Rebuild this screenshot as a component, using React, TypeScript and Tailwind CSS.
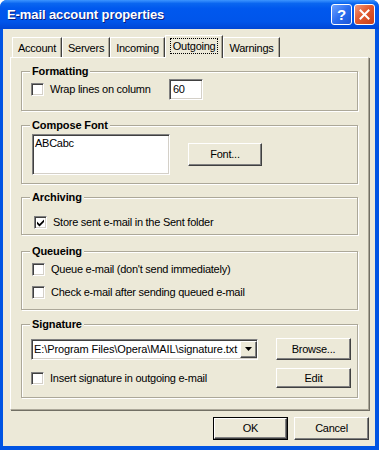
import React from "react";

const FONT = { fontFamily: '"Liberation Sans", Arial, sans-serif' };

function Sunken({ className = "", children }: { className?: string; children?: React.ReactNode }) {
  return (
    <div
      className={
        "bg-white border border-t-[#808080] border-l-[#808080] border-b-white border-r-white shadow-[inset_1px_1px_0_#404040,inset_-1px_-1px_0_#d4d0c8] " +
        className
      }
    >
      {children}
    </div>
  );
}

function Check({ checked = false }: { checked?: boolean }) {
  return (
    <div className="w-[13px] h-[13px] shrink-0 bg-white border border-t-[#808080] border-l-[#808080] border-b-white border-r-white shadow-[inset_1px_1px_0_#404040,inset_-1px_-1px_0_#d4d0c8] flex items-center justify-center">
      {checked && (
        <svg width="9" height="9" viewBox="0 0 9 9">
          <path d="M1 3.5 L3.5 6 L8 1.5 L8 4 L3.5 8.5 L1 6 Z" fill="#000" />
        </svg>
      )}
    </div>
  );
}

function Btn({ children, w = 75, h = 23, def = false }: { children: React.ReactNode; w?: number; h?: number; def?: boolean }) {
  const inner = (
    <div className="w-full h-full flex items-center justify-center border border-t-white border-l-white border-b-[#404040] border-r-[#404040] shadow-[inset_-1px_-1px_0_#808080] text-[11px] text-black">
      {children}
    </div>
  );
  return (
    <div
      style={{ width: w, height: h }}
      className={def ? "border border-black shrink-0" : "shrink-0"}
    >
      {inner}
    </div>
  );
}

function Group({ label, className = "", children }: { label: string; className?: string; children?: React.ReactNode }) {
  return (
    <div
      className={
        "relative border border-[#aca899] shadow-[1px_1px_0_#fff,inset_1px_1px_0_#fff] " + className
      }
    >
      <span className="absolute left-[8px] -top-[8px] px-[2px] bg-[#ECE9D8] text-[11px] font-bold leading-[14px] tracking-[-0.1px] text-black">
        {label}
      </span>
      {children}
    </div>
  );
}

function Tab({ label, selected = false }: { label: string; selected?: boolean }) {
  if (selected) {
    return (
      <div className="relative z-10 -mb-[1px] h-[23px] px-[5px] flex items-start pt-[3px] bg-[#ECE9D8] border border-b-0 border-t-white border-l-white border-r-[#404040] shadow-[inset_-1px_0_0_#aca899]">
        <span className="px-[2px] leading-[14px] outline outline-1 outline-dotted outline-black text-[11px]">
          {label}
        </span>
      </div>
    );
  }
  return (
    <div className="h-[20px] px-[5px] flex items-start pt-[3px] bg-[#ECE9D8] border border-b-0 border-t-white border-l-white border-r-[#404040] shadow-[inset_-1px_0_0_#aca899] text-[11px]">
      <span className="leading-[14px]">{label}</span>
    </div>
  );
}

export default function App() {
  return (
    <div
      style={FONT}
      className="w-[379px] h-[450px] flex flex-col bg-[#0054E3] rounded-t-[7px] overflow-hidden text-black"
    >
      {/* Title bar */}
      <div className="h-[29px] shrink-0 flex items-center pl-[7px] pr-[4px] bg-[linear-gradient(to_bottom,#3D95FF_0%,#0A66F0_12%,#0058EE_30%,#0055EA_75%,#0046D5_100%)]">
        <span className="text-white font-bold text-[13px] tracking-[-0.1px] [text-shadow:1px_1px_0_#0a1e80]">
          E-mail account properties
        </span>
        <div className="ml-auto flex gap-[2px]">
          <div className="w-[21px] h-[21px] rounded-[3px] border border-white bg-[linear-gradient(135deg,#6FA2FF_0%,#2B6EF0_50%,#1A55D8_100%)] flex items-center justify-center text-white font-bold text-[15px] leading-none">
            ?
          </div>
          <div className="w-[21px] h-[21px] rounded-[3px] border border-white bg-[linear-gradient(135deg,#F39A7E_0%,#E25A30_45%,#C8401A_100%)] flex items-center justify-center">
            <svg width="11" height="11" viewBox="0 0 11 11">
              <path d="M1.5 1.5 L9.5 9.5 M9.5 1.5 L1.5 9.5" stroke="#fff" strokeWidth="2" strokeLinecap="square" />
            </svg>
          </div>
        </div>
      </div>

      {/* Body */}
      <div className="flex-1 ml-[3px] mr-[4px] mb-[4px] bg-[#ECE9D8] flex flex-col pt-[6px] pl-[7px] pr-[6px] tracking-[-0.25px]">
        {/* Tabs */}
        <div className="h-[22px] flex items-end pl-[2px]">
          <Tab label="Account" />
          <Tab label="Servers" />
          <Tab label="Incoming" />
          <Tab label="Outgoing" selected />
          <Tab label="Warnings" />
        </div>

        {/* Panel */}
        <div className="h-[353px] flex flex-col px-[10px] border border-t-white border-l-white border-r-[#aca899] border-b-[#aca899] shadow-[1px_1px_0_#716f64]">
          <Group label="Formatting" className="mt-[13px] h-[40px] flex items-start pt-[7px] pl-[9px]">
            <div className="w-[138px] h-[21px] flex items-center">
              <Check />
              <span className="ml-[6px] text-[11px]">Wrap lines on column</span>
            </div>
            <Sunken className="w-[34px] h-[21px] flex items-center pl-[3px] text-[11px]">
              60
            </Sunken>
          </Group>

          <Group label="Compose Font" className="mt-[14px] h-[59px] flex items-start pt-[8px] pl-[10px]">
            <Sunken className="w-[138px] h-[41px] pl-[2px] pt-[2px] text-[11px] leading-[13px]">ABCabc</Sunken>
            <div className="ml-[18px] mt-[9px]">
              <Btn w={74}>Font...</Btn>
            </div>
          </Group>

          <Group label="Archiving" className="mt-[13px] h-[38px] pt-[18px] pl-[12px]">
            <div className="flex items-center h-[13px]">
              <Check checked />
              <span className="ml-[6px] text-[11px]">Store sent e-mail in the Sent folder</span>
            </div>
          </Group>

          <Group label="Queueing" className="mt-[16px] h-[59px] pt-[11px] pl-[10px] flex flex-col gap-[10px]">
            <div className="flex items-center h-[13px]">
              <Check />
              <span className="ml-[6px] text-[11px]">Queue e-mail (don't send immediately)</span>
            </div>
            <div className="flex items-center h-[13px]">
              <Check />
              <span className="ml-[6px] text-[11px]">Check e-mail after sending queued e-mail</span>
            </div>
          </Group>

          <Group label="Signature" className="mt-[14px] h-[74px] pt-[13px] pl-[9px] pr-[6px] flex flex-col">
            <div className="flex items-center">
              <Sunken className="w-[227px] h-[21px] flex items-center pl-[2px] text-[11px] overflow-hidden whitespace-nowrap">
                <span className="flex-1 overflow-hidden tracking-[-0.1px]">E:\Program Files\Opera\MAIL\signature.txt</span>
                <div className="w-[17px] h-[17px] shrink-0 bg-[#ECE9D8] border border-t-white border-l-white border-b-[#404040] border-r-[#404040] shadow-[inset_-1px_-1px_0_#808080] flex items-center justify-center">
                  <svg width="7" height="4" viewBox="0 0 7 4">
                    <path d="M0 0 H7 L3.5 4 Z" fill="#000" />
                  </svg>
                </div>
              </Sunken>
              <div className="ml-auto">
                <Btn h={22}>Browse...</Btn>
              </div>
            </div>
            <div className="flex items-center mt-[8px]">
              <Check />
              <span className="ml-[6px] text-[11px]">Insert signature in outgoing e-mail</span>
              <div className="ml-auto">
                <Btn h={20}>Edit</Btn>
              </div>
            </div>
          </Group>
        </div>

        {/* Bottom buttons */}
        <div className="mt-[7px] flex justify-end gap-[6px]">
          <Btn def>OK</Btn>
          <Btn>Cancel</Btn>
        </div>
      </div>
    </div>
  );
}
